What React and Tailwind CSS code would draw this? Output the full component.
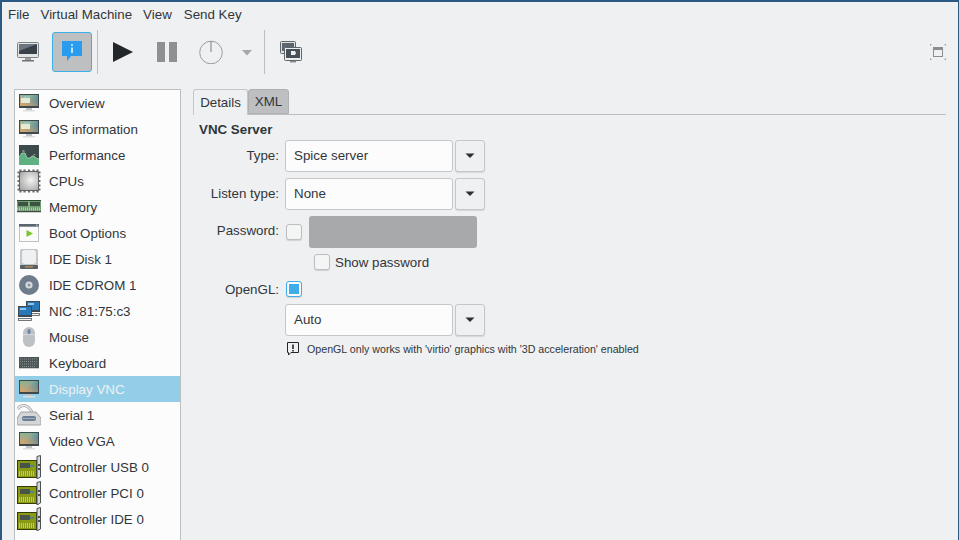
import { useId } from 'react';

const fontStack = "font-['Liberation_Sans',Arial,sans-serif]";

const Monitor = ({ win }) => {
  const a = useId();
  const b = useId();
  return (
    <svg width="20" height="18" viewBox="0 0 20 18">
      <defs>
        <linearGradient id={a} x1="0" y1="0" x2="1" y2="0.6">
          <stop offset="0" stopColor="#5fbd9f" />
          <stop offset="0.5" stopColor="#82ad9a" />
          <stop offset="1" stopColor="#3f84a4" />
        </linearGradient>
        <linearGradient id={b} x1="0" y1="1" x2="0.7" y2="0">
          <stop offset="0" stopColor="#d9a36c" />
          <stop offset="1" stopColor="#d9a36c" stopOpacity="0" />
        </linearGradient>
      </defs>
      <rect width="20" height="14" fill="#3f484c" />
      <rect x="1" y="1" width="18" height="11" fill={`url(#${a})`} />
      <rect x="1" y="1" width="18" height="11" fill={`url(#${b})`} />
      {win && <rect x="2" y="2" width="9" height="7" fill="#e3ead6" />}
      {win && <rect x="2" y="2" width="9" height="2" fill="#8fc3c8" />}
      {win && <rect x="3" y="2.5" width="1.5" height="1" fill="#e08a5e" />}
      {win && <rect x="5.5" y="2.5" width="1.5" height="1" fill="#e2c35c" />}
      <rect x="7" y="14" width="6" height="2" fill="#bfc3c5" />
      <rect x="4" y="16" width="12" height="1.5" fill="#dcdfe0" />
    </svg>
  );
};

const Performance = () => (
  <svg width="20" height="20" viewBox="0 0 20 20">
    <rect width="20" height="20" fill="#3d4a4c" />
    <path d="M0 12 L3 8 L6 8 L8 13 L11 13 L13 11 L15 11 L17 13 L20 14 V20 H0 Z" fill="#5fb083" />
    <path d="M0 12 L3 8 L6 8 L8 13 L11 13 L13 11 L15 11 L17 13 L20 14" fill="none" stroke="#b8e0c4" strokeWidth="0.7" />
    <path d="M4 5v2M5 5v2M15 9v1M16 9v1" stroke="#c0c8c8" strokeWidth="0.6" />
  </svg>
);

const Cpu = () => {
  const id = useId();
  return (
    <svg width="24" height="24" viewBox="0 0 24 24">
      <defs>
        <radialGradient id={id} cx="0.6" cy="0.45" r="0.7">
          <stop offset="0" stopColor="#f4f4f2" />
          <stop offset="1" stopColor="#a9aaa8" />
        </radialGradient>
      </defs>
      <path d="M3.5 0.5v23M7.5 0.5v23M12 0.5v23M16.5 0.5v23M20.5 0.5v23" stroke="#6a6d6e" strokeWidth="2.2" />
      <path d="M0.5 3.5h23M0.5 7.5h23M0.5 12h23M0.5 16.5h23M0.5 20.5h23" stroke="#6a6d6e" strokeWidth="2.2" />
      <rect x="2" y="2" width="20" height="20" rx="2" fill="#5f6263" />
      <rect x="3" y="3" width="18" height="18" rx="1.5" fill={`url(#${id})`} />
    </svg>
  );
};

const Memory = () => (
  <svg width="24" height="16" viewBox="0 0 24 16">
    <rect y="1" width="24" height="12" fill="#6f9c72" />
    <rect y="1" width="24" height="1" fill="#2f4636" />
    <rect x="1" y="3" width="10" height="4" fill="#3d5243" />
    <rect x="13" y="3" width="10" height="4" fill="#3d5243" />
    <rect x="11.5" y="2" width="1" height="6" fill="#7fd080" />
    <path d="M0 10h24" stroke="#d2c766" strokeWidth="3" strokeDasharray="1 1" />
    <rect y="12" width="24" height="1" fill="#3f4a40" />
    <rect y="13" width="24" height="1" fill="#cfd2d3" />
  </svg>
);

const Boot = () => (
  <svg width="20" height="18" viewBox="0 0 20 18">
    <rect x="0.5" y="2.5" width="19" height="15" fill="#fbfbfb" stroke="#bcc3c6" />
    <rect width="20" height="2.5" fill="#59656f" />
    <rect x="17" y="0.7" width="1.5" height="1" fill="#e4e8ea" />
    <path d="M7.5 6 L14 9.5 L7.5 13 Z" fill="#77c72a" />
  </svg>
);

const Disk = () => (
  <svg width="18" height="20" viewBox="0 0 18 20">
    <rect width="18" height="20" rx="1.5" fill="#c3c7ca" />
    <rect x="2" y="1" width="14" height="14" rx="3" fill="#eef0f1" />
    <rect y="16" width="18" height="4" rx="1" fill="#596066" />
    <rect x="5" y="17" width="8" height="1.5" fill="#b48a4a" />
  </svg>
);

const Cdrom = () => (
  <svg width="20" height="20" viewBox="0 0 20 20">
    <circle cx="10" cy="10" r="10" fill="#6f7c8c" />
    <circle cx="10" cy="10" r="3.6" fill="#d6dadf" />
    <circle cx="10" cy="10" r="1.5" fill="#8b95a2" />
  </svg>
);

const Pc = ({ x, y }) => (
  <g transform={`translate(${x} ${y})`}>
    <rect width="14" height="11" fill="#3f4a52" />
    <rect x="1" y="1" width="12" height="8" fill="#2a78b8" />
    <rect x="2" y="2" width="6" height="2" fill="#8cc4ea" />
    <rect x="0.5" y="12.5" width="13" height="2" fill="#f2f3f3" stroke="#4f585e" strokeWidth="0.8" />
  </g>
);

const Nic = () => (
  <svg width="22" height="20" viewBox="0 0 22 20">
    <Pc x="8" y="0" />
    <Pc x="0" y="5" />
  </svg>
);

const Mouse = () => (
  <svg width="12" height="20" viewBox="0 0 12 20">
    <rect width="12" height="20" rx="6" fill="#bdc1c5" />
    <path d="M0 8 C4 7 8 7 12 8" stroke="#d9dcde" fill="none" />
    <rect x="4.5" y="2" width="3" height="5" rx="1.5" fill="#6e8aa6" />
  </svg>
);

const Keyboard = () => (
  <svg width="20" height="12" viewBox="0 0 20 12">
    <rect width="20" height="11" fill="#4d5557" />
    <path d="M1 2h18M1 4.5h18M1 7h18M3 9.5h14" stroke="#8a9091" strokeWidth="1" strokeDasharray="1 1" />
    <rect y="11" width="20" height="1" fill="#c9cccd" />
  </svg>
);

const Serial = () => (
  <svg width="24" height="22" viewBox="0 0 24 22">
    <path d="M0.5 5 C5 -1 11 1 15 8" fill="none" stroke="#a9acae" strokeWidth="3" />
    <path d="M0.5 5 C5 -1 11 1 15 8" fill="none" stroke="#e6e7e8" strokeWidth="1.4" />
    <path d="M4 8 L19 8 L24 14 V20 Q24 21 23 21 H1 Q0 21 0 20 V14 Z" fill="#d4d6d7" stroke="#8f9294" strokeWidth="0.8" />
    <rect x="5" y="12" width="14" height="5" rx="2" fill="#6d7f94" />
    <path d="M6.5 14.5h11" stroke="#cfd8e2" strokeDasharray="1 1" />
  </svg>
);

const Controller = () => (
  <svg width="24" height="24" viewBox="0 0 24 24">
    <rect x="0.5" y="5.5" width="19" height="17" fill="#8a9a14" stroke="#353b08" />
    <rect x="3" y="8" width="10" height="5" fill="#4a5348" />
    <rect x="13" y="10" width="4" height="1.5" fill="#2f80c0" />
    <path d="M2 18.5h16" stroke="#c8d030" strokeWidth="5" strokeDasharray="1 1" />
    <path d="M20 1.5 L23.5 0.5 V22 L20 24 Z" fill="#d5d7d8" stroke="#4a5053" strokeWidth="1" />
    <rect x="21" y="9" width="2" height="2" fill="#4a5053" />
    <rect x="21" y="13" width="2" height="2" fill="#4a5053" />
  </svg>
);

const items = [
  ['Overview', <Monitor win />],
  ['OS information', <Monitor win />],
  ['Performance', <Performance />],
  ['CPUs', <Cpu />],
  ['Memory', <Memory />],
  ['Boot Options', <Boot />],
  ['IDE Disk 1', <Disk />],
  ['IDE CDROM 1', <Cdrom />],
  ['NIC :81:75:c3', <Nic />],
  ['Mouse', <Mouse />],
  ['Keyboard', <Keyboard />],
  ['Display VNC', <Monitor />],
  ['Serial 1', <Serial />],
  ['Video VGA', <Monitor />],
  ['Controller USB 0', <Controller />],
  ['Controller PCI 0', <Controller />],
  ['Controller IDE 0', <Controller />],
];

const Combo = ({ value }) => (
  <div className="flex gap-[2px]">
    <div className="w-[168px] h-[32px] flex items-center pl-[8px] pb-[2px] bg-[#fcfcfc] border border-[#c4c6c8] rounded-[3px]">{value}</div>
    <button className="w-[30px] h-[32px] flex items-center justify-center bg-[#eff0f1] border border-[#c4c6c8] rounded-[3px] shadow-[0_1px_1px_#d5d6d8]">
      <svg width="10" height="6" viewBox="0 0 10 6">
        <path d="M0.5 0.5 H9.5 L5 5 Z" fill="#2c3034" />
      </svg>
    </button>
  </div>
);

const Check = ({ checked }) => (
  <div className={`w-[16px] h-[16px] rounded-[3px] border flex items-center justify-center shadow-[0_1px_1px_#d0d1d3] ${checked ? 'border-[#3daee9] bg-[#fcfcfc]' : 'border-[#bcbec0] bg-[#f4f5f5]'}`}>
    {checked && <div className="w-[10px] h-[10px] bg-[#3daee9]" />}
  </div>
);

const Label = ({ children }) => <div className="text-right pr-[6px] pb-[1px]">{children}</div>;

export default function App() {
  return (
    <div className={`w-[959px] h-[540px] overflow-hidden flex flex-col bg-[#eff0f1] border-t-2 border-l-2 border-r border-[#2a5a84] text-[13.33px] leading-[15px] text-[#31363b] ${fontStack}`}>
      {/* menu */}
      <div className="flex h-[24px] items-center pl-[6px] gap-[11px]">
        <span>File</span>
        <span>Virtual Machine</span>
        <span>View</span>
        <span className="ml-px">Send Key</span>
      </div>

      {/* toolbar */}
      <div className="flex items-center h-[52px] pl-[10px] pr-[10px]">
        <div className="w-[32px] flex justify-center">
          <svg width="22" height="20" viewBox="0 0 22 20">
            <rect x="0.5" y="0.5" width="21" height="15" rx="1" fill="#e2e4e5" stroke="#7d8184" />
            <rect x="2" y="2" width="18" height="10" fill="#3a414a" />
            <path d="M2 2h18L2 9Z" fill="#6c7681" />
            <rect x="8" y="16" width="6" height="2" fill="#9a9ea1" />
            <rect x="5" y="18" width="12" height="1.5" fill="#6f7376" />
          </svg>
        </div>
        <div className="ml-[8px] w-[40px] h-[40px] flex items-center justify-center bg-[#bdbfc1] border border-[#3daee9] rounded-[3px]">
          <svg width="20" height="22" viewBox="0 0 20 22">
            <path d="M0 0 H20 V15 H9 L5 20 V15 H0 Z" fill="#2a9cf0" />
            <circle cx="10" cy="4" r="1" fill="#e8f4fd" />
            <rect x="9.2" y="6.5" width="1.6" height="5.5" fill="#e8f4fd" />
          </svg>
        </div>
        <div className="ml-[5px] w-px h-[44px] bg-[#bcbec0]" />
        <div className="w-[50px] flex justify-center">
          <svg width="20" height="20" viewBox="0 0 20 20">
            <path d="M0 0 L20 10 L0 20 Z" fill="#22272b" />
          </svg>
        </div>
        <div className="w-[22px] ml-[8px] flex justify-center">
          <svg width="20" height="20" viewBox="0 0 20 20">
            <rect width="8" height="20" fill="#8e9091" />
            <rect x="12" width="8" height="20" fill="#8e9091" />
          </svg>
        </div>
        <div className="w-[24px] ml-[21px] flex justify-center">
          <svg width="24" height="24" viewBox="0 0 24 24">
            <circle cx="12" cy="12.5" r="11.3" fill="none" stroke="#9a9c9e" strokeWidth="1" />
            <path d="M12 1 V12" stroke="#8e9092" strokeWidth="1.2" />
          </svg>
        </div>
        <div className="ml-[19px] mt-[1px]">
          <svg className="block" width="10" height="6" viewBox="0 0 10 6">
            <path d="M0 0 H10 L5 5.5 Z" fill="#a5a7a9" />
          </svg>
        </div>
        <div className="ml-[12px] w-px h-[44px] bg-[#bcbec0]" />
        <div className="ml-[15px]">
          <svg width="22" height="22" viewBox="0 0 22 22">
            <rect x="0.5" y="0.5" width="15" height="12" rx="1" fill="#dfe1e2" stroke="#5f6569" />
            <rect x="2" y="2" width="12" height="8" fill="#5c6670" />
            <rect x="4.5" y="6.5" width="17" height="13" rx="1" fill="#eceded" stroke="#5f6569" />
            <rect x="6" y="8" width="14" height="9" fill="#47515a" />
            <path d="M11 10 h4 l1 2 l-1 2 h-4 Z" fill="#eef0f1" />
            <rect x="10" y="20" width="6" height="1.5" fill="#8a8e91" />
          </svg>
        </div>
        <div className="ml-auto mr-[2px]">
          <svg className="block" width="16" height="16" viewBox="0 0 16 16">
            <path d="M0 2V0H2M14 0H16V2M16 14V16H14M2 16H0V14" fill="none" stroke="#8b8d8f" strokeWidth="1" />
            <rect x="3.5" y="3.5" width="9" height="9" fill="none" stroke="#8b8d8f" />
            <rect x="3" y="3" width="10" height="3" fill="#8b8d8f" />
          </svg>
        </div>
      </div>

      {/* main */}
      <div className="flex flex-1 min-h-0 pt-[11px] pl-[12px]">
        <div className="w-[167px] shrink-0 bg-[#fcfcfc] border border-b-0 border-[#bcbec0]">
          {items.map(([name, icon]) => {
            const selected = name === 'Display VNC';
            return (
              <div key={name} className={`flex items-center h-[26px] ${selected ? 'bg-[#93cee9] text-[#eff0f1]' : ''}`}>
                <div className="w-[28px] mr-[6px] shrink-0 flex justify-center items-center h-[26px]">{icon}</div>
                <span>{name}</span>
              </div>
            );
          })}
        </div>

        <div className="ml-[12px] w-[753px]">
          <div className="flex border-b border-[#bcbec0] h-[26px]">
            <div className="w-[55px] h-[26px] flex items-center justify-center bg-[#eff0f1] border border-b-0 border-[#c4c6c8] rounded-t-[3px]">Details</div>
            <div className="w-[41px] h-[25px] flex items-center justify-center bg-[#bdbfc1] border border-[#aeb0b2] rounded-t-[3px]">XML</div>
          </div>

          <div className="font-bold pl-[6px] pt-[7px] pb-[3px]">VNC Server</div>

          <div className="grid grid-cols-[92px_1fr] items-center gap-y-[6px]">
            <Label>Type:</Label>
            <Combo value="Spice server" />
            <Label>Listen type:</Label>
            <Combo value="None" />
            <div className="text-right pr-[6px] pb-[3px]">Password:</div>
            <div className="flex items-center gap-[7px] pl-px">
              <Check />
              <div className="w-[168px] h-[32px] bg-[#a8a9aa] rounded-[3px]" />
            </div>
            <div />
            <div className="flex items-center gap-[5px] pl-[29px]">
              <Check />
              <span>Show password</span>
            </div>
            <div className="text-right pr-[6px] pb-[1px] mt-[5px]">OpenGL:</div>
            <div className="pl-px mt-[5px] mb-[1px]">
              <Check checked />
            </div>
            <div />
            <Combo value="Auto" />
            <div />
            <div className="flex items-center gap-[8px] pl-[2px] text-[10.67px] leading-[13px]">
              <svg width="12" height="14" viewBox="0 0 12 14">
                <path d="M0.5 0.5 H11.5 V10.5 H4 L1.5 13 V10.5 H0.5 Z" fill="#eff0f1" stroke="#232629" />
                <rect x="5.2" y="2.5" width="1.6" height="4.5" fill="#232629" />
                <rect x="5.2" y="8" width="1.6" height="1.5" fill="#232629" />
              </svg>
              <span>OpenGL only works with 'virtio' graphics with '3D acceleration' enabled</span>
            </div>
          </div>
        </div>
      </div>
    </div>
  );
}
